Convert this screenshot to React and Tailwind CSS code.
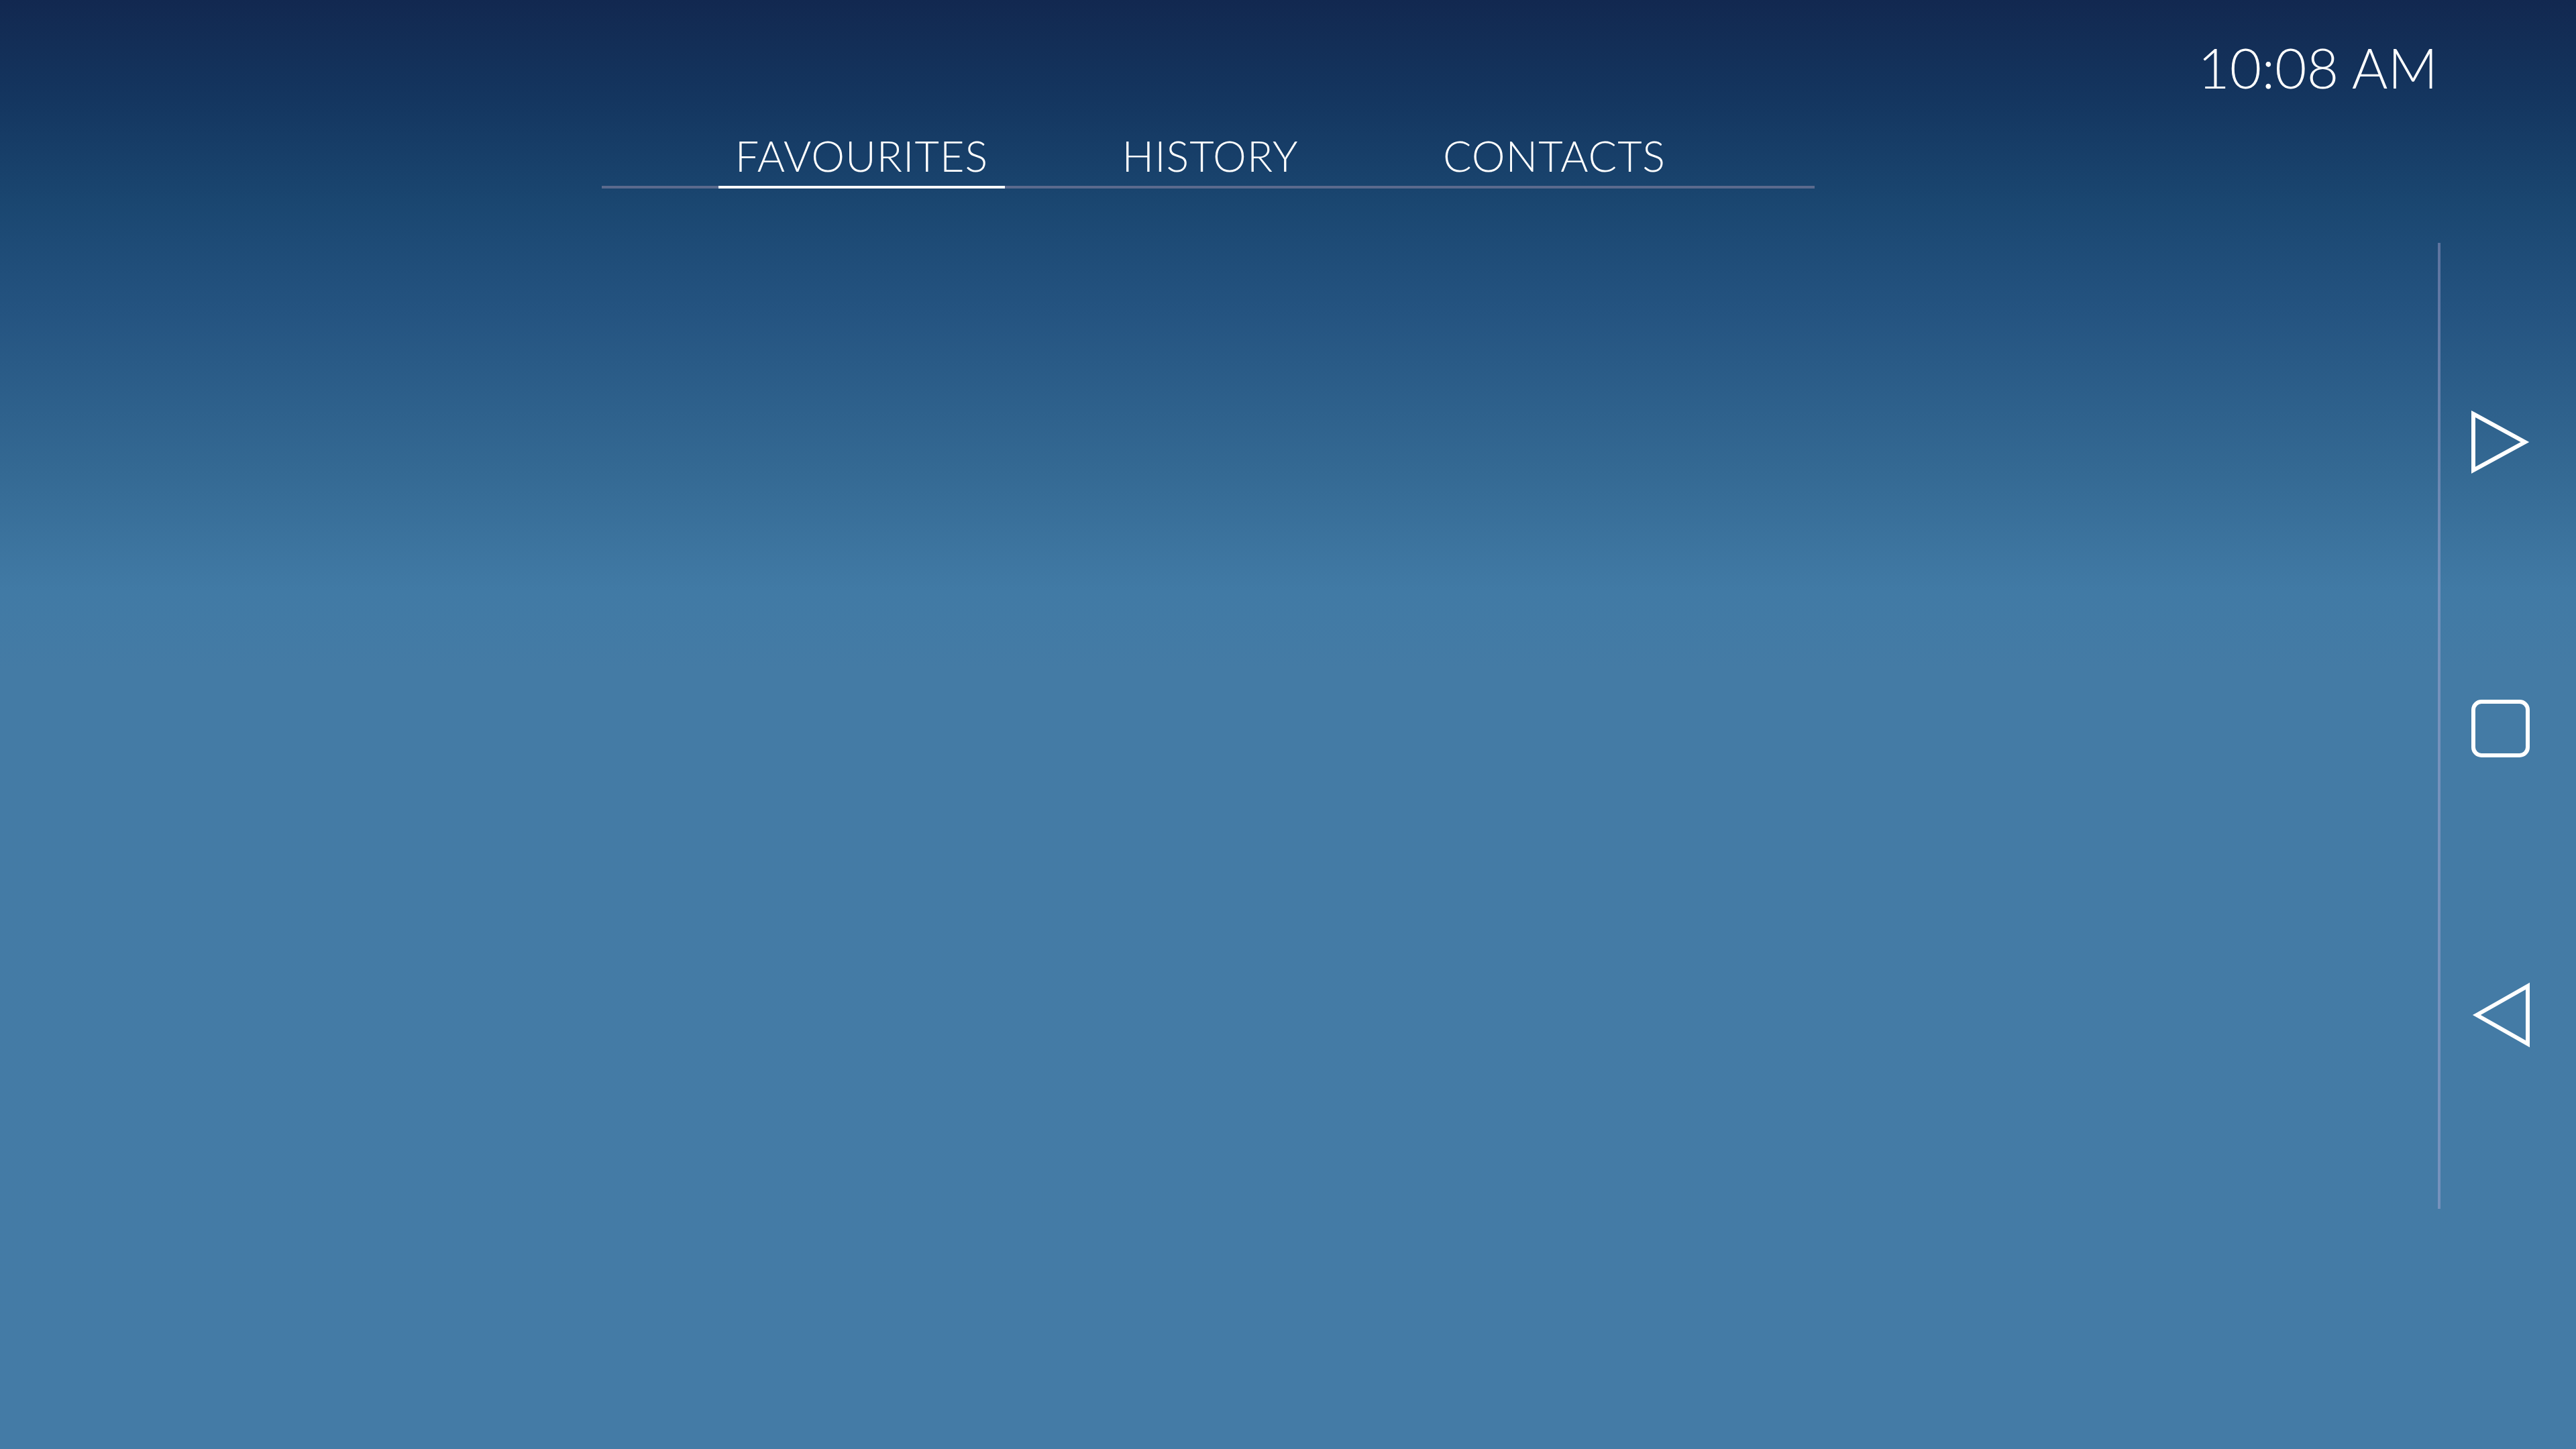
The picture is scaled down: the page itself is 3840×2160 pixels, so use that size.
import React from "react";

const tabs = [
  { label: "FAVOURITES", active: true, cls: "w-[427px]" },
  { label: "HISTORY", active: false, cls: "w-[320px] ml-[146px]" },
  { label: "CONTACTS", active: false, cls: "w-[396px] ml-[155px]" },
];

const PlayIcon = () => (
  <svg width="92" height="100" viewBox="0 0 92 100" fill="none">
    <polygon points="5,8 82,50 5,92" stroke="white" strokeWidth="6" strokeLinejoin="miter" />
  </svg>
);

const SquareIcon = () => (
  <svg width="92" height="100" viewBox="0 0 92 100" fill="none">
    <rect x="5" y="10" width="81" height="80" rx="12" stroke="white" strokeWidth="6" />
  </svg>
);

const BackIcon = () => (
  <svg width="92" height="100" viewBox="0 0 92 100" fill="none">
    <polygon points="10,50 86,7 86,93" stroke="white" strokeWidth="6" strokeLinejoin="miter" />
  </svg>
);

export default function App() {
  return (
    <div
      className="w-full h-[2160px] overflow-hidden text-white font-light bg-[linear-gradient(180deg,#122850_0px,#143660_150px,#1a4670_300px,#245380_460px,#346993_700px,#417aa5_880px,#447ba5_1000px,#447ba6_2160px)]"
      style={{ fontFamily: "Lato, 'Open Sans', sans-serif" }}
    >
      {/* status bar */}
      <div className="flex justify-end pt-[59px] pr-[206px]">
        <span className="text-[82px] leading-none">10:08 AM</span>
      </div>

      {/* tabs */}
      <div className="mt-[59px] ml-[897px] w-[1808px] flex pl-[174px] border-b-4 border-[#5b6a8d]">
        {tabs.map((t) => (
          <div
            key={t.label}
            className={`${t.cls} text-center pb-[14px] -mb-[4px] border-b-4 text-[63px] leading-none tracking-[1px] ${
              t.active ? "border-white" : "border-transparent"
            }`}
          >
            {t.label}
          </div>
        ))}
      </div>

      {/* body */}
      <div className="flex justify-end mt-[81px]">
        <div className="w-[206px] h-[1440px] border-l-4 border-[rgba(200,185,225,0.38)] flex flex-col pl-[44px] pt-[247px] gap-[327px]">
          <PlayIcon />
          <SquareIcon />
          <BackIcon />
        </div>
      </div>
    </div>
  );
}
